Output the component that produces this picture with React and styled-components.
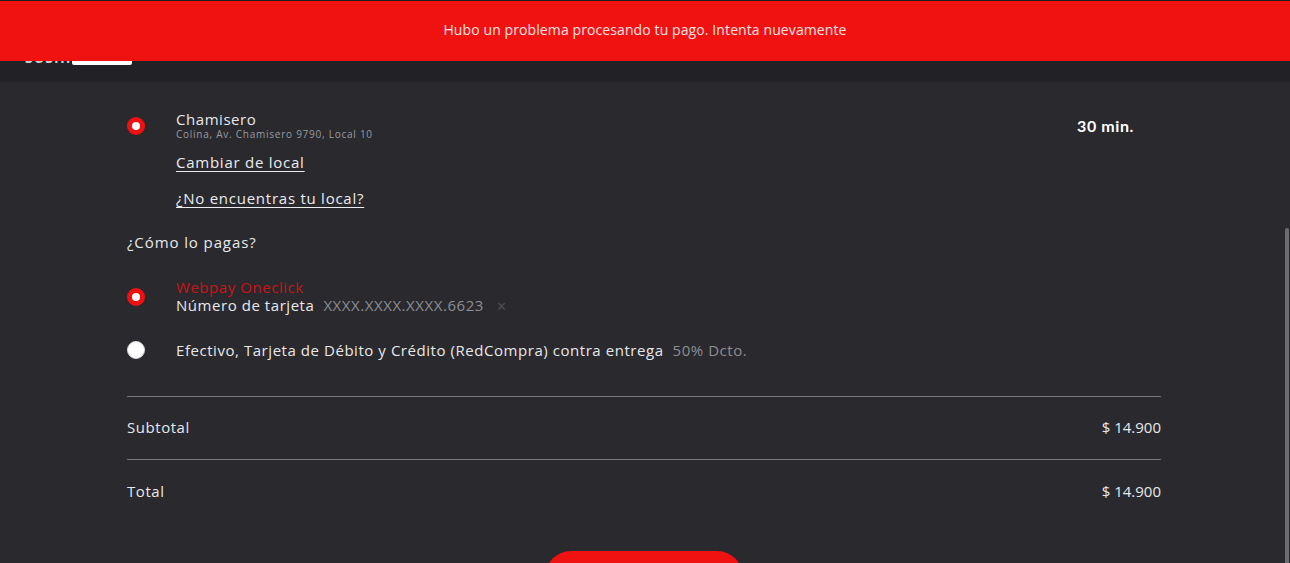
import React from 'react';
import { styled, createGlobalStyle } from 'styled-components';

const GlobalStyle = createGlobalStyle`
  html, body {
    margin: 0;
    padding: 0;
    background: #1c1c1f;
  }
  body {
    font-family: 'Open Sans', 'Liberation Sans', sans-serif;
    color: #e8e8ea;
    overflow: hidden;
    letter-spacing: 0.55px;
  }
`;

const Page = styled.div`
  min-height: 100vh;
  background: #29292e;
  margin-top: 1px;
`;

const Header = styled.header`
  height: 81px;
  background: #222226;
  display: flex;
  align-items: flex-end;
  padding: 0 0 17px 25px;
  box-sizing: border-box;
`;

const Logo = styled.div`
  display: flex;
  align-items: flex-end;
  gap: 1px;
  font-weight: 700;
  font-size: 14px;
  letter-spacing: 1px;
  color: #cfcfd2;
  line-height: 1;
`;

const LogoBar = styled.span`
  display: block;
  width: 60px;
  height: 20px;
  background: #fff;
  border-radius: 2px;
`;

const Toast = styled.div`
  position: fixed;
  top: 1px;
  left: 0;
  right: 0;
  height: 60px;
  padding-bottom: 3px;
  box-sizing: border-box;
  background: #f01211;
  color: #fde3e3;
  font-size: 14px;
  letter-spacing: 0.1px;
  display: flex;
  align-items: center;
  justify-content: center;
  z-index: 10;
`;

const Main = styled.main`
  width: 1034px;
  margin-left: calc(50% - 518px);
  padding-top: 28px;
`;

const OptionRow = styled.div`
  display: flex;
  align-items: center;
  margin-top: ${p => p.$mt || 0}px;
`;

const Radio = styled.span`
  width: 18px;
  height: 18px;
  border-radius: 50%;
  flex: none;
  margin-right: 31px;
  box-sizing: border-box;
  background: #ffffff;
  border: ${p => (p.$checked ? '5.5px solid #ef1111' : '1px solid #d8d8d8')};
`;

const OptionBody = styled.div`
  flex: 1;
  display: flex;
  flex-direction: column;
`;

const StoreTop = styled.div`
  display: flex;
  justify-content: space-between;
  align-items: center;
`;

const StoreName = styled.div`
  font-size: 15px;
  line-height: 18px;
`;

const StoreAddr = styled.div`
  font-size: 10px;
  line-height: 13px;
  letter-spacing: 0.75px;
  color: #9b9b9f;
`;

const Eta = styled.div`
  font-family: 'Lato', sans-serif;
  font-weight: 700;
  font-size: 16px;
  letter-spacing: 0.6px;
  color: #fff;
  margin-right: 27px;
`;

const LinkText = styled.a`
  display: block;
  margin-left: 49px;
  margin-top: ${p => p.$mt}px;
  font-size: 15px;
  line-height: 18px;
  letter-spacing: 0.75px;
  color: #ececee;
  text-decoration: underline;
  text-underline-offset: 3px;
  width: fit-content;
`;

const Question = styled.div`
  margin-top: 26px;
  font-size: 15px;
  line-height: 18px;
  letter-spacing: 0.9px;
`;

const Line = styled.div`
  font-size: 15px;
  line-height: 18px;
  color: ${p => p.$color || '#e8e8ea'};
`;

const Muted = styled.span`
  color: #8e8e92;
  margin-left: 9px;
`;

const Remove = styled.span`
  color: #4d4d52;
  margin-left: 12px;
  font-size: 13px;
`;

const Divider = styled.hr`
  border: none;
  border-top: 1px solid #77777b;
  margin: ${p => p.$mt || 0}px 0 0;
`;

const SummaryRow = styled.div`
  display: flex;
  justify-content: space-between;
  align-items: center;
  height: ${p => p.$h}px;
  padding-bottom: 2px;
  box-sizing: border-box;
  font-size: 15px;
`;

const Amount = styled.span`
  letter-spacing: 0;
`;

const ButtonWrap = styled.div`
  display: flex;
  justify-content: center;
  margin-top: 28px;
`;

const PayButton = styled.button`
  width: 198px;
  height: 52px;
  border: none;
  border-radius: 26px;
  background: #f01211;
`;

const ScrollThumb = styled.div`
  position: fixed;
  right: 1px;
  top: 228px;
  bottom: 0;
  width: 4px;
  background: #6c6c70;
  border-radius: 2px 2px 0 0;
`;

export default function App() {
  return (
    <>
      <GlobalStyle />
      <Toast>Hubo un problema procesando tu pago. Intenta nuevamente</Toast>
      <Page>
        <Header>
          <Logo>
            SUSHI
            <LogoBar />
          </Logo>
        </Header>
        <Main>
          <OptionRow>
            <Radio $checked />
            <OptionBody>
              <StoreTop>
                <div>
                  <StoreName>Chamisero</StoreName>
                  <StoreAddr>Colina, Av. Chamisero 9790, Local 10</StoreAddr>
                </div>
                <Eta>30 min.</Eta>
              </StoreTop>
            </OptionBody>
          </OptionRow>
          <LinkText $mt={12}>Cambiar de local</LinkText>
          <LinkText $mt={18}>¿No encuentras tu local?</LinkText>
          <Question>¿Cómo lo pagas?</Question>
          <OptionRow $mt={27}>
            <Radio $checked />
            <OptionBody>
              <Line $color="#c8161a">Webpay Oneclick</Line>
              <Line>
                Número de tarjeta<Muted>XXXX.XXXX.XXXX.6623</Muted>
                <Remove>✕</Remove>
              </Line>
            </OptionBody>
          </OptionRow>
          <OptionRow $mt={26}>
            <Radio />
            <OptionBody>
              <Line>
                Efectivo, Tarjeta de Débito y Crédito (RedCompra) contra entrega
                <Muted>50% Dcto.</Muted>
              </Line>
            </OptionBody>
          </OptionRow>
          <Divider $mt={37} />
          <SummaryRow $h={62}>
            <span>Subtotal</span>
            <Amount>$ 14.900</Amount>
          </SummaryRow>
          <Divider />
          <SummaryRow $h={63}>
            <span>Total</span>
            <Amount>$ 14.900</Amount>
          </SummaryRow>
          <ButtonWrap>
            <PayButton aria-label="Pagar" />
          </ButtonWrap>
        </Main>
      </Page>
      <ScrollThumb />
    </>
  );
}
